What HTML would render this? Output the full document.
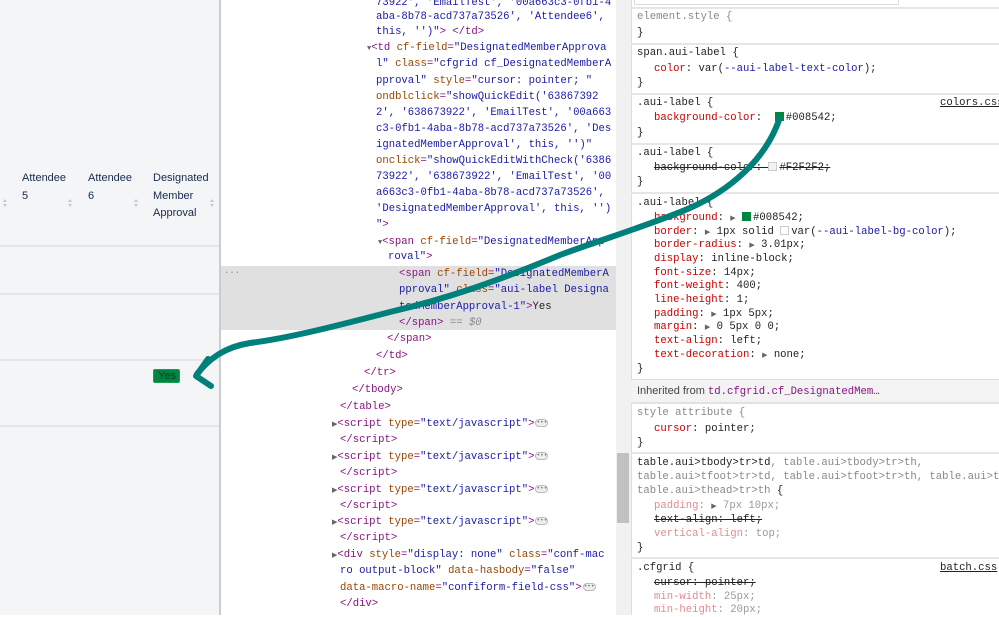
<!DOCTYPE html>
<html><head><meta charset="utf-8"><style>
*{margin:0;padding:0;box-sizing:border-box}
body{width:999px;height:615px;overflow:hidden;background:#fff;position:relative;font-family:"Liberation Sans",sans-serif}
#left{position:absolute;left:0;top:0;width:221px;height:615px;background:#f4f5f7;border-right:2px solid #c9ccd1}
.h{position:absolute;font-size:11px;line-height:17.5px;color:#172b4d}
.hr{position:absolute;left:0;width:219px;height:2px;background:#e4e6ea}
.sort{position:absolute;width:5px;height:10px}
.sort:before{content:"";position:absolute;left:0;top:0;border-left:2.5px solid transparent;border-right:2.5px solid transparent;border-bottom:3px solid #c1c7d0}
.sort:after{content:"";position:absolute;left:0;top:5px;border-left:2.5px solid transparent;border-right:2.5px solid transparent;border-top:3px solid #c1c7d0}
#yes{position:absolute;left:153px;top:369px;width:27px;height:14px;background:#008542;border:1px solid #1f9a55;border-radius:2px;font-size:11px;line-height:12px;color:#0b3b1b;padding-left:4px}
.e{position:absolute;white-space:pre;font-family:"Liberation Mono",monospace;font-size:10.6px;line-height:16px;color:#222}
.s{position:absolute;white-space:pre;font-family:"Liberation Mono",monospace;font-size:10.6px;line-height:14px;color:#222}
.t{color:#881280}.a{color:#994500}.v{color:#1a1aa6}
.p{color:#c80000}.g{color:#888}.b{color:#1a1aa6}.pf{color:#e08c8c}.gf{color:#999}
.del{text-decoration:line-through}
.tri{font-size:7px;color:#666}
.dots{display:inline-block;width:13px;height:8px;border:1px solid #bbb;border-radius:4px;background:#eee;vertical-align:middle;margin-left:1px;font-size:6px;line-height:5px;text-align:center;color:#777}
.sep{position:absolute;left:631px;width:368px;height:2px;background:#e6e6e6}
.sw{display:inline-block;width:9px;height:9px;background:#008542;vertical-align:-1px;margin-right:2px}
.sw2{display:inline-block;width:9px;height:9px;background:#f2f2f2;border:1px solid #ccc;vertical-align:-1px;margin-right:2px}
</style></head><body>
<div id="left">
<div class="h" style="left:22px;top:170px">Attendee<br>5</div>
<div class="h" style="left:88px;top:170px">Attendee<br>6</div>
<div class="h" style="left:153px;top:170px">Designated<br>Member<br>Approval</div>
<div class="sort" style="left:3px;top:199px"></div>
<div class="sort" style="left:68px;top:199px"></div>
<div class="sort" style="left:134px;top:199px"></div>
<div class="sort" style="left:210px;top:199px"></div>
<div class="hr" style="top:245px"></div>
<div class="hr" style="top:293px"></div>
<div class="hr" style="top:359px"></div>
<div class="hr" style="top:425px"></div>
<div id="yes">Yes</div>
</div>

<div style="position:absolute;left:221px;top:266px;width:395px;height:64px;background:#e0e0e0"></div>
<div class="e g" style="left:224px;top:263px;font-size:9px">...</div>

<div class="e" style="left:376px;top:-5px"><span class="v">73922', 'EmailTest', '00a663c3-0fb1-4</span></div>
<div class="e" style="left:376px;top:9px"><span class="v">aba-8b78-acd737a73526', 'Attendee6',</span></div>
<div class="e" style="left:376px;top:24px"><span class="v">this, '')"</span><span class="t">&gt; &lt;/td&gt;</span></div>
<div class="e" style="left:367px;top:40px"><span class="tri">▼</span><span class="t">&lt;td </span><span class="a">cf-field</span><span class="t">=</span><span class="v">"DesignatedMemberApprova</span></div>
<div class="e" style="left:376px;top:56px"><span class="v">l"</span> <span class="a">class</span><span class="t">=</span><span class="v">"cfgrid cf_DesignatedMemberA</span></div>
<div class="e" style="left:376px;top:73px"><span class="v">pproval"</span> <span class="a">style</span><span class="t">=</span><span class="v">"cursor: pointer; "</span></div>
<div class="e" style="left:376px;top:89px"><span class="a">ondblclick</span><span class="t">=</span><span class="v">"showQuickEdit('63867392</span></div>
<div class="e" style="left:376px;top:105px"><span class="v">2', '638673922', 'EmailTest', '00a663</span></div>
<div class="e" style="left:376px;top:121px"><span class="v">c3-0fb1-4aba-8b78-acd737a73526', 'Des</span></div>
<div class="e" style="left:376px;top:137px"><span class="v">ignatedMemberApproval', this, '')"</span></div>
<div class="e" style="left:376px;top:153px"><span class="a">onclick</span><span class="t">=</span><span class="v">"showQuickEditWithCheck('6386</span></div>
<div class="e" style="left:376px;top:169px"><span class="v">73922', '638673922', 'EmailTest', '00</span></div>
<div class="e" style="left:376px;top:185px"><span class="v">a663c3-0fb1-4aba-8b78-acd737a73526',</span></div>
<div class="e" style="left:376px;top:201px"><span class="v">'DesignatedMemberApproval', this, '')</span></div>
<div class="e" style="left:376px;top:217px"><span class="v">"</span><span class="t">&gt;</span></div>
<div class="e" style="left:378px;top:234px"><span class="tri">▼</span><span class="t">&lt;span </span><span class="a">cf-field</span><span class="t">=</span><span class="v">"DesignatedMemberApp</span></div>
<div class="e" style="left:388px;top:249px"><span class="v">roval"</span><span class="t">&gt;</span></div>
<div class="e" style="left:399px;top:266px"><span class="t">&lt;span </span><span class="a">cf-field</span><span class="t">=</span><span class="v">"DesignatedMemberA</span></div>
<div class="e" style="left:399px;top:282px"><span class="v">pproval"</span> <span class="a">class</span><span class="t">=</span><span class="v">"aui-label Designa</span></div>
<div class="e" style="left:399px;top:299px"><span class="v">tedMemberApproval-1"</span><span class="t">&gt;</span>Yes</div>
<div class="e" style="left:399px;top:315px"><span class="t">&lt;/span&gt;</span> <span class="g">== <i>$0</i></span></div>
<div class="e" style="left:387px;top:331px"><span class="t">&lt;/span&gt;</span></div>
<div class="e" style="left:376px;top:348px"><span class="t">&lt;/td&gt;</span></div>
<div class="e" style="left:364px;top:365px"><span class="t">&lt;/tr&gt;</span></div>
<div class="e" style="left:352px;top:382px"><span class="t">&lt;/tbody&gt;</span></div>
<div class="e" style="left:340px;top:399px"><span class="t">&lt;/table&gt;</span></div>
<div class="e" style="left:332px;top:416px"><span class="tri">▶</span><span class="t">&lt;script </span><span class="a">type</span><span class="t">=</span><span class="v">"text/javascript"</span><span class="t">&gt;</span><span class="dots">•••</span></div>
<div class="e" style="left:340px;top:432px"><span class="t">&lt;/script&gt;</span></div>
<div class="e" style="left:332px;top:449px"><span class="tri">▶</span><span class="t">&lt;script </span><span class="a">type</span><span class="t">=</span><span class="v">"text/javascript"</span><span class="t">&gt;</span><span class="dots">•••</span></div>
<div class="e" style="left:340px;top:465px"><span class="t">&lt;/script&gt;</span></div>
<div class="e" style="left:332px;top:482px"><span class="tri">▶</span><span class="t">&lt;script </span><span class="a">type</span><span class="t">=</span><span class="v">"text/javascript"</span><span class="t">&gt;</span><span class="dots">•••</span></div>
<div class="e" style="left:340px;top:498px"><span class="t">&lt;/script&gt;</span></div>
<div class="e" style="left:332px;top:514px"><span class="tri">▶</span><span class="t">&lt;script </span><span class="a">type</span><span class="t">=</span><span class="v">"text/javascript"</span><span class="t">&gt;</span><span class="dots">•••</span></div>
<div class="e" style="left:340px;top:530px"><span class="t">&lt;/script&gt;</span></div>
<div class="e" style="left:332px;top:547px"><span class="tri">▶</span><span class="t">&lt;div </span><span class="a">style</span><span class="t">=</span><span class="v">"display: none"</span> <span class="a">class</span><span class="t">=</span><span class="v">"conf-mac</span></div>
<div class="e" style="left:340px;top:563px"><span class="v">ro output-block"</span> <span class="a">data-hasbody</span><span class="t">=</span><span class="v">"false"</span></div>
<div class="e" style="left:340px;top:580px"><span class="a">data-macro-name</span><span class="t">=</span><span class="v">"confiform-field-css"</span><span class="t">&gt;</span><span class="dots">•••</span></div>
<div class="e" style="left:340px;top:596px"><span class="t">&lt;/div&gt;</span></div>

<div style="position:absolute;left:616px;top:0;width:15px;height:615px;background:#f1f1f1"></div>
<div style="position:absolute;left:617px;top:453px;width:12px;height:70px;background:#c1c1c1"></div>

<div style="position:absolute;left:631px;top:0;width:368px;height:615px;border-left:1px solid #ddd;background:#fff"></div>
<div style="position:absolute;left:634px;top:0;width:265px;height:5px;border:1px solid #ddd;border-top:none;background:#fff"></div>
<div class="sep" style="top:7px"></div>
<div class="sep" style="top:43px"></div>
<div class="sep" style="top:93px"></div>
<div class="sep" style="top:143px"></div>
<div class="sep" style="top:192px"></div>
<div style="position:absolute;left:631px;top:379px;width:368px;height:25px;background:#f3f3f3;border-top:1px solid #ddd;border-bottom:2px solid #e2e2e2"></div>
<div class="sep" style="top:452px"></div>
<div class="sep" style="top:557px"></div>

<div class="s" style="left:637px;top:10px"><span class="g">element.style {</span></div>
<div class="s" style="left:637px;top:26px">}</div>
<div class="s" style="left:637px;top:46px">span.aui-label {</div>
<div class="s" style="left:654px;top:62px"><span class="p">color</span>: var(<span class="b">--aui-label-text-color</span>);</div>
<div class="s" style="left:637px;top:76px">}</div>
<div class="s" style="left:637px;top:96px">.aui-label {</div>
<div class="s" style="left:940px;top:96px;text-decoration:underline">colors.css</div>
<div class="s" style="left:654px;top:111px"><span class="p">background-color</span>:  <span class="sw"></span>#008542;</div>
<div class="s" style="left:637px;top:126px">}</div>
<div class="s" style="left:637px;top:146px">.aui-label {</div>
<div class="s del" style="left:654px;top:161px">background-color: <span class="sw2"></span>#F2F2F2;</div>
<div class="s" style="left:637px;top:175px">}</div>
<div class="s" style="left:637px;top:196px">.aui-label {</div>
<div class="s" style="left:654px;top:211px"><span class="p">background</span>: <span class="tri">▶</span> <span class="sw"></span>#008542;</div>
<div class="s" style="left:654px;top:225px"><span class="p">border</span>: <span class="tri">▶</span> 1px solid <span class="sw2" style="background:#fff"></span>var(<span class="b">--aui-label-bg-color</span>);</div>
<div class="s" style="left:654px;top:238px"><span class="p">border-radius</span>: <span class="tri">▶</span> 3.01px;</div>
<div class="s" style="left:654px;top:252px"><span class="p">display</span>: inline-block;</div>
<div class="s" style="left:654px;top:266px"><span class="p">font-size</span>: 14px;</div>
<div class="s" style="left:654px;top:279px"><span class="p">font-weight</span>: 400;</div>
<div class="s" style="left:654px;top:293px"><span class="p">line-height</span>: 1;</div>
<div class="s" style="left:654px;top:307px"><span class="p">padding</span>: <span class="tri">▶</span> 1px 5px;</div>
<div class="s" style="left:654px;top:320px"><span class="p">margin</span>: <span class="tri">▶</span> 0 5px 0 0;</div>
<div class="s" style="left:654px;top:334px"><span class="p">text-align</span>: left;</div>
<div class="s" style="left:654px;top:348px"><span class="p">text-decoration</span>: <span class="tri">▶</span> none;</div>
<div class="s" style="left:637px;top:362px">}</div>
<div style="position:absolute;left:637px;top:385px;font-size:11px;color:#444;white-space:pre">Inherited from <span style="font-family:'Liberation Mono',monospace;font-size:10.6px;color:#881280">td.cfgrid.cf_DesignatedMem…</span></div>
<div class="s" style="left:637px;top:406px"><span class="g">style attribute {</span></div>
<div class="s" style="left:654px;top:422px"><span class="p">cursor</span>: pointer;</div>
<div class="s" style="left:637px;top:436px">}</div>
<div class="s" style="left:637px;top:456px">table.aui&gt;tbody&gt;tr&gt;td<span class="g">, table.aui&gt;tbody&gt;tr&gt;th,</span></div>
<div class="s" style="left:637px;top:470px"><span class="g">table.aui&gt;tfoot&gt;tr&gt;td, table.aui&gt;tfoot&gt;tr&gt;th, table.aui&gt;t</span></div>
<div class="s" style="left:637px;top:484px"><span class="g">table.aui&gt;thead&gt;tr&gt;th</span> {</div>
<div class="s" style="left:654px;top:499px"><span class="pf">padding</span><span class="gf">: <span class="tri">▶</span> 7px 10px;</span></div>
<div class="s del" style="left:654px;top:513px">text-align: left;</div>
<div class="s" style="left:654px;top:527px"><span class="pf">vertical-align</span><span class="gf">: top;</span></div>
<div class="s" style="left:637px;top:541px">}</div>
<div class="s" style="left:637px;top:561px">.cfgrid {</div>
<div class="s" style="left:940px;top:561px;text-decoration:underline">batch.css</div>
<div class="s del" style="left:654px;top:576px">cursor: pointer;</div>
<div class="s" style="left:654px;top:590px"><span class="pf">min-width</span><span class="gf">: 25px;</span></div>
<div class="s" style="left:654px;top:603px"><span class="pf">min-height</span><span class="gf">: 20px;</span></div>

<svg style="position:absolute;left:0;top:0" width="999" height="615">
<g fill="none" stroke="#00807a" stroke-width="6" stroke-linecap="round" stroke-linejoin="round">
<path d="M779 120 C765 160 730 190 690 208 C650 225 600 240 560 255 C500 280 450 298 390 312 C340 325 290 338 250 343 C225 347 210 358 197 374"/>
<path d="M208 359 L196 376 L211 386"/>
</g>
</svg>
</body></html>
